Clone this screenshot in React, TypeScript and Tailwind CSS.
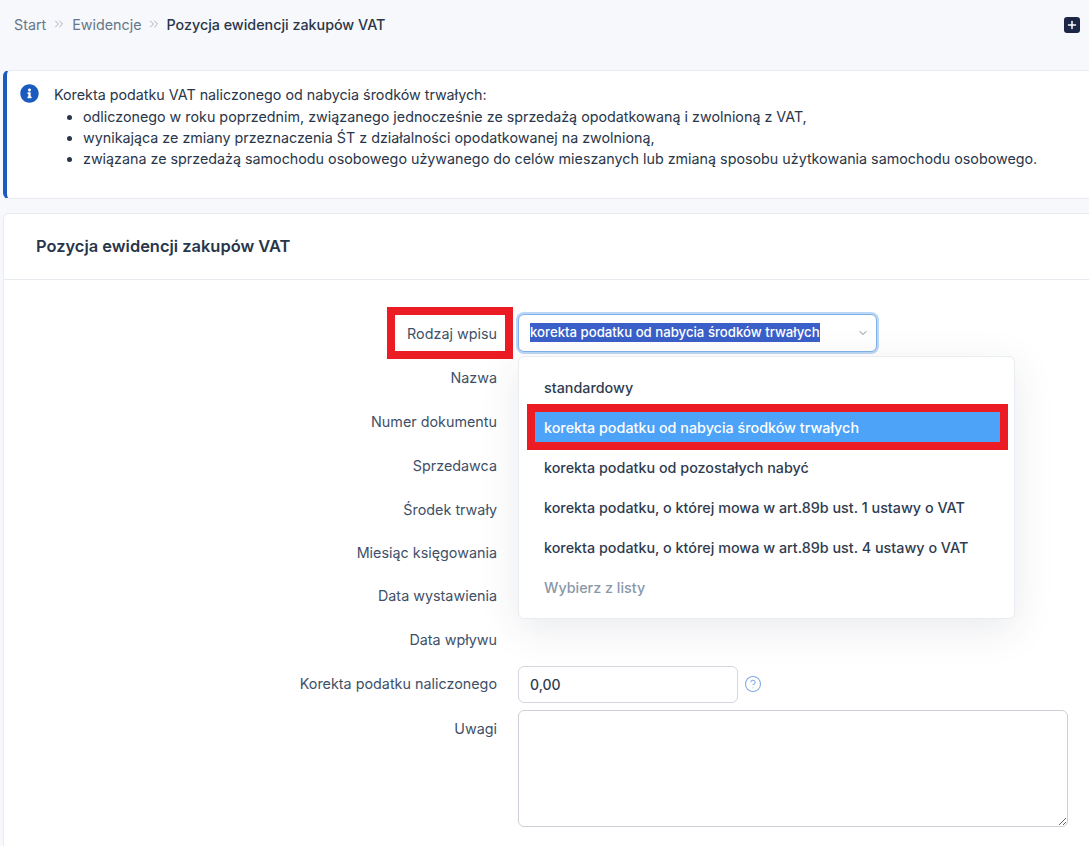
import { ChevronDown, ChevronsRight, CircleHelp, Plus } from 'lucide-react'
import { FaInfoCircle } from 'react-icons/fa'

const OPTIONS = [
  'standardowy',
  'korekta podatku od nabycia środków trwałych',
  'korekta podatku od pozostałych nabyć',
  'korekta podatku, o której mowa w art.89b ust. 1 ustawy o VAT',
  'korekta podatku, o której mowa w art.89b ust. 4 ustawy o VAT',
  'Wybierz z listy',
]

const HIDDEN_ROWS: { label: string; height: string }[] = [
  { label: 'Nazwa', height: 'h-[44px]' },
  { label: 'Numer dokumentu', height: 'h-[44px]' },
  { label: 'Sprzedawca', height: 'h-[44px]' },
  { label: 'Środek trwały', height: 'h-[43px]' },
  { label: 'Miesiąc księgowania', height: 'h-[43px]' },
  { label: 'Data wystawienia', height: 'h-[44px]' },
  { label: 'Data wpływu', height: 'h-[44px]' },
]

function Label({ children }: { children: React.ReactNode }) {
  return <div className="w-[493px] shrink-0 pt-[2px] text-right text-[14.35px] text-[#3e5068]">{children}</div>
}

function Dropdown() {
  return (
    <div className="absolute left-[514px] top-[76px] z-10 w-[497px] h-[263px] rounded-md bg-white border border-[#e9ecf1] pt-[11px] px-[8px] shadow-[0_10px_40px_rgba(40,50,80,0.1)]">
      {OPTIONS.map((opt, i) => (
        <div
          key={opt}
          className={`h-[40px] flex items-center px-[17px] text-[14.35px] font-medium ${
            i === 1 ? 'relative text-white' : i === 5 ? 'text-[#8a97a8]' : 'text-[#2f3c50]'
          }`}
        >
          {i === 1 && (
            <div className="absolute left-0 right-[-2px] top-[-4px] bottom-[-2px] bg-[#4da3f7] border-[8px] border-[#ec1c24]" />
          )}
          <span className="relative">{opt}</span>
        </div>
      ))}
    </div>
  )
}

export default function App() {
  return (
    <div className="h-screen overflow-hidden bg-[#f6f8fb] text-[#29364a] font-['Inter',sans-serif]">
      {/* Breadcrumb */}
      <div className="h-[70px] pl-[14px] pr-[9px] pt-[15px] flex items-start justify-between">
        <div className="flex items-center h-[20px] text-[14.3px]">
          <span className="text-[#66768a]">Start</span>
          <ChevronsRight size={14} strokeWidth={1.5} className="text-[#9aa5b3] mx-[6px] -mt-[2px]" />
          <span className="text-[#66768a]">Ewidencje</span>
          <ChevronsRight size={14} strokeWidth={1.5} className="text-[#9aa5b3] ml-[5px] mr-[6px] -mt-[2px]" />
          <span className="text-[#29364a] font-medium">Pozycja ewidencji zakupów VAT</span>
        </div>
        <div className="w-[16px] h-[16px] mt-[2px] rounded-[3px] bg-[#1c2647] flex items-center justify-center">
          <Plus size={12} strokeWidth={3} className="text-white" />
        </div>
      </div>

      <div className="ml-[3px] -mr-[20px]">
        {/* Alert */}
        <div className="h-[129px] bg-white border border-[#e8ebf0] border-l-[4px] border-l-[#1a5bbd] rounded-l-md flex pl-[13px] pt-[13px]">
          <FaInfoCircle size={19} className="text-[#1a5bbd] shrink-0" />
          <div className="ml-[15px] text-[14.3px] leading-[21px] text-[#29364a]">
            <p>Korekta podatku VAT naliczonego od nabycia środków trwałych:</p>
            <ul className="list-disc pl-[29px] mt-[1px]">
              <li>odliczonego w roku poprzednim, związanego jednocześnie ze sprzedażą opodatkowaną i zwolnioną z VAT,</li>
              <li>wynikająca ze zmiany przeznaczenia ŚT z działalności opodatkowanej na zwolnioną,</li>
              <li>związana ze sprzedażą samochodu osobowego używanego do celów mieszanych lub zmianą sposobu użytkowania samochodu osobowego.</li>
            </ul>
          </div>
        </div>

        {/* Card */}
        <div className="mt-[14px] bg-white border border-[#e8ebf0] rounded-l-md h-[700px]">
          <div className="h-[66px] border-b border-[#e8ebf0] flex items-center pl-[32px]">
            <h2 className="text-[16.45px] font-semibold text-[#29364a]">Pozycja ewidencji zakupów VAT</h2>
          </div>

          <div className="relative pt-[31px]">
            {/* Rodzaj wpisu */}
            <div className="relative h-[44px] flex items-center">
              <Label>Rodzaj wpisu</Label>
              <div className="absolute left-[383px] top-[-4px] w-[126px] h-[52px] border-[8px] border-[#ec1c24]" />
              <div className="ml-[21px] w-[359px] h-[38px] -mt-[1px] rounded-md border border-[#7fb2ea] ring-[2px] ring-[#bcd7f5] bg-white flex items-center justify-between pl-[11px] pr-[6px]">
                <span className="bg-[#3a5fc8] text-white text-[13.2px] font-medium leading-[19px]">
                  korekta podatku od nabycia środków trwałych
                </span>
                <ChevronDown size={12} className="text-[#7c8896] mr-[1px]" />
              </div>
            </div>

            {HIDDEN_ROWS.map(row => (
              <div key={row.label} className={`${row.height} flex items-center`}>
                <Label>{row.label}</Label>
              </div>
            ))}

            <Dropdown />

            {/* Korekta */}
            <div className="h-[44px] flex items-center">
              <Label>Korekta podatku naliczonego</Label>
              <input
                readOnly
                value="0,00"
                className="ml-[21px] w-[220px] h-[37px] mt-[2px] rounded-md border border-[#d3d8de] bg-white px-[11px] text-[14px] font-medium text-[#2f3c50] outline-none"
              />
              <CircleHelp size={18} strokeWidth={1.4} className="ml-[6px] mt-[2px] text-[#7fa9e6]" />
            </div>

            {/* Uwagi */}
            <div className="flex items-start mt-[5px]">
              <div className="w-[493px] shrink-0 pt-[8px] text-right text-[14.35px] text-[#3e5068]">Uwagi</div>
              <textarea
                readOnly
                className="ml-[21px] w-[550px] h-[117px] rounded-md border border-[#ccd1d7] bg-white outline-none"
              />
            </div>
          </div>
        </div>
      </div>
    </div>
  )
}
